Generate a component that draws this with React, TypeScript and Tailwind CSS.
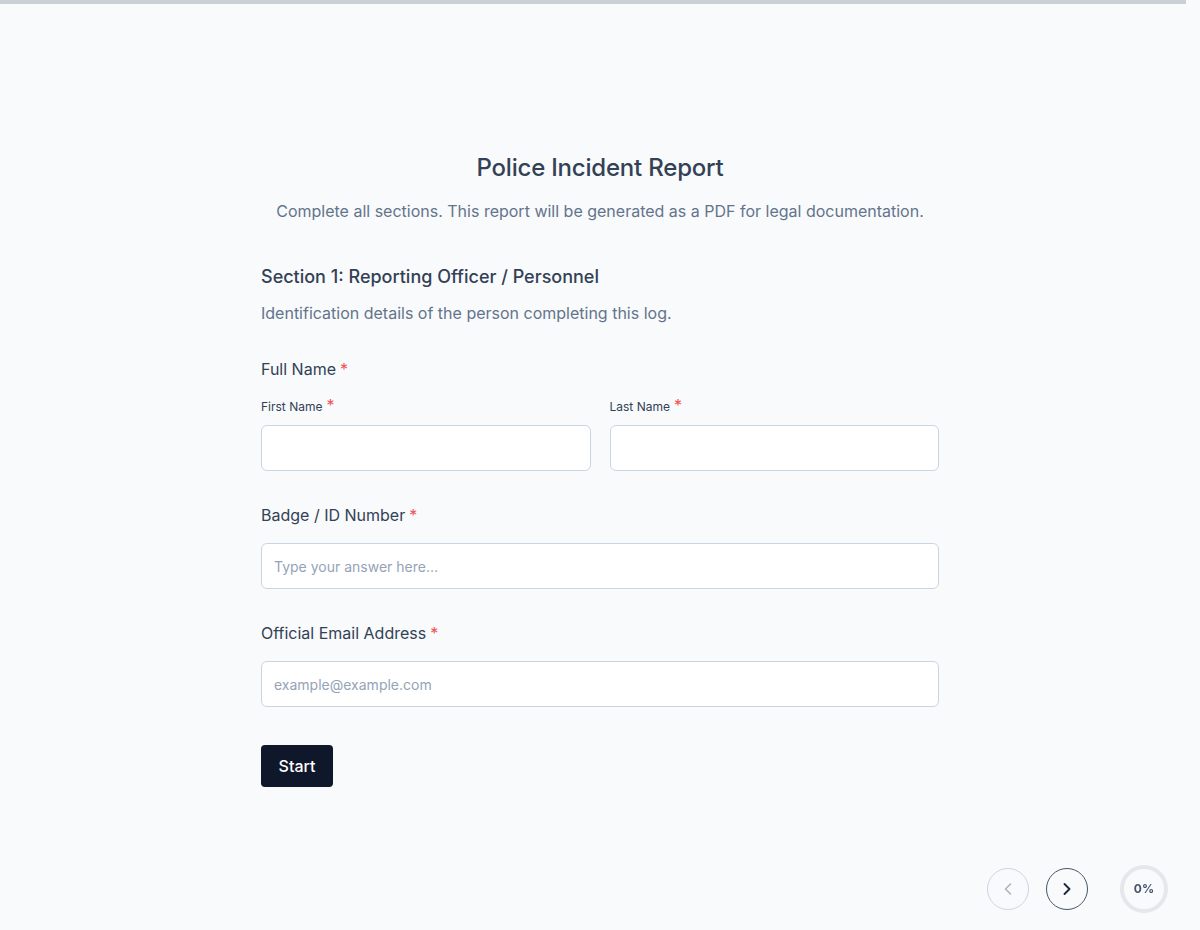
import { ChevronLeft, ChevronRight } from 'lucide-react';

function Req({ big }: { big?: boolean }) {
  return (
    <span className={big ? 'ml-1 align-top text-[16px] leading-4 text-[#f05252]' : 'ml-1 text-[#f05252]'}>*</span>
  );
}

function TextInput({ placeholder }: { placeholder?: string }) {
  return (
    <input
      type="text"
      placeholder={placeholder}
      className="h-[46px] w-full rounded-md border border-[#cbd5e1] bg-white px-3 text-[14px] text-[#334155] outline-none placeholder:text-[#94a3b8]"
    />
  );
}

export default function App() {
  return (
    <div
      className="relative min-h-screen bg-[#f8fafc] text-[#334155]"
      style={{ fontFamily: 'Inter, "Noto Sans", sans-serif' }}
    >
      <div className="h-[4px] w-[1186px] bg-[#cbd0d6]" />

      <div className="mx-auto w-[678px] pt-[148px]">
        <h1 className="text-center text-[24px] leading-8 font-medium tracking-[-0.2px] text-[#334155]">
          Police Incident Report
        </h1>
        <p className="mt-[15px] text-center text-[16px] leading-6 text-[#64748b]">
          Complete all sections. This report will be generated as a PDF for legal documentation.
        </p>

        <h2 className="mt-10 text-[18px] leading-7 font-medium text-[#334155]">
          Section 1: Reporting Officer / Personnel
        </h2>
        <p className="mt-[10px] text-[16px] leading-6 text-[#64748b]">
          Identification details of the person completing this log.
        </p>

        <div className="mt-8">
          <div className="text-[16px] leading-6">
            Full Name
            <Req />
          </div>
          <div className="mt-4 grid grid-cols-2 gap-[19px]">
            <div>
              <div className="text-[12px] leading-5 text-[#334155]">
                First Name
                <Req big />
              </div>
              <div className="mt-2">
                <TextInput />
              </div>
            </div>
            <div>
              <div className="text-[12px] leading-5 text-[#334155]">
                Last Name
                <Req big />
              </div>
              <div className="mt-2">
                <TextInput />
              </div>
            </div>
          </div>
        </div>

        <div className="mt-8">
          <div className="text-[16px] leading-6">
            Badge / ID Number
            <Req />
          </div>
          <div className="mt-4">
            <TextInput placeholder="Type your answer here..." />
          </div>
        </div>

        <div className="mt-8">
          <div className="text-[16px] leading-6">
            Official Email Address
            <Req />
          </div>
          <div className="mt-4">
            <TextInput placeholder="example@example.com" />
          </div>
        </div>

        <button className="mt-[38px] h-[42px] w-[72px] rounded-[4px] bg-[#0f172a] text-[16px] font-medium text-white">
          Start
        </button>
      </div>

      <div className="fixed right-[32px] bottom-[17px] flex items-center">
        <button className="flex h-[42px] w-[42px] items-center justify-center rounded-full border border-[#cbd5e1] text-[#a8b1bd]">
          <ChevronLeft size={20} strokeWidth={1.75} />
        </button>
        <button className="ml-[17px] flex h-[42px] w-[42px] items-center justify-center rounded-full border border-[#475569] text-[#1e293b]">
          <ChevronRight size={20} strokeWidth={2.25} />
        </button>
        <div className="ml-[32px] flex h-[48px] w-[48px] items-center justify-center rounded-full border-[4px] border-[#e5e7eb] text-[12px] font-bold text-[#475569]">
          0%
        </div>
      </div>
    </div>
  );
}
